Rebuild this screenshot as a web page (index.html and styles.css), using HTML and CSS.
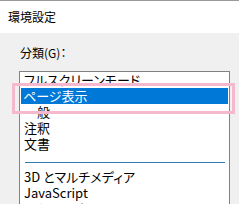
FILE: index.html
```html
<!DOCTYPE html>
<html lang="ja">
  <head>
    <meta charset="UTF-8" />
    <meta name="viewport" content="width=device-width, initial-scale=1.0" />
    <title>環境設定</title>
    <link rel="stylesheet" href="styles.css">
  </head>
  <body>
    <div class="window">
      <div class="titlebar">環境設定</div>
      <div class="panel">
        <div class="label">分類(G)：</div>
        <ul class="categories">
          <li>フルスクリーンモード</li>
          <li class="selected">ページ表示</li>
          <li>一般</li>
          <li>注釈</li>
          <li>文書</li>
          <li class="divider"></li>
          <li>3D とマルチメディア</li>
          <li>JavaScript</li>
          <li>アクセシビリティ</li>
          <li>アクション</li>
        </ul>
      </div>
      <div class="highlight"></div>
    </div>
  </body>
</html>
```

FILE: styles.css
```css
html,
body {
  margin: 0;
  height: 204px;
  overflow: hidden;
}
body {
  background-color: #f0f0f0;
  font-family: "Noto Sans CJK JP", "Noto Sans", sans-serif;
  font-feature-settings: "palt";
  color: #000;
}
.window {
  position: relative;
  height: 204px;
}
.titlebar {
  height: 32px;
  border-top: 1px solid #9a9a9a;
  background-color: #fff;
  padding-left: 8px;
  font-size: 12px;
  line-height: 32px;
}
.panel {
  padding: 12px 0 0 19px;
}
.label {
  padding-left: 1px;
  font-size: 12px;
  line-height: 16px;
  margin-bottom: 10px;
}
.categories {
  list-style: none;
  margin: 0;
  padding: 0;
  width: 209px;
  height: 140px;
  border: 1px solid #828282;
  border-bottom: none;
  background-color: #fff;
  overflow: hidden;
  font-size: 13px;
}
.categories li {
  height: 16px;
  line-height: 16px;
  padding-left: 4px;
  margin-right: 1px;
  white-space: nowrap;
}
.categories li.selected {
  background-color: #0078d7;
  color: #fff;
  padding-left: 2px;
  margin-left: 1px;
}
.categories li.divider {
  height: 11px;
  margin: 0 4px 6px 5px;
  padding: 0;
  box-sizing: border-box;
  border-bottom: 1px solid #2e7db1;
}
.highlight {
  position: absolute;
  left: 12px;
  top: 83px;
  width: 223px;
  height: 31px;
  box-sizing: border-box;
  border: 3px solid #f6b8ce;
}
```
